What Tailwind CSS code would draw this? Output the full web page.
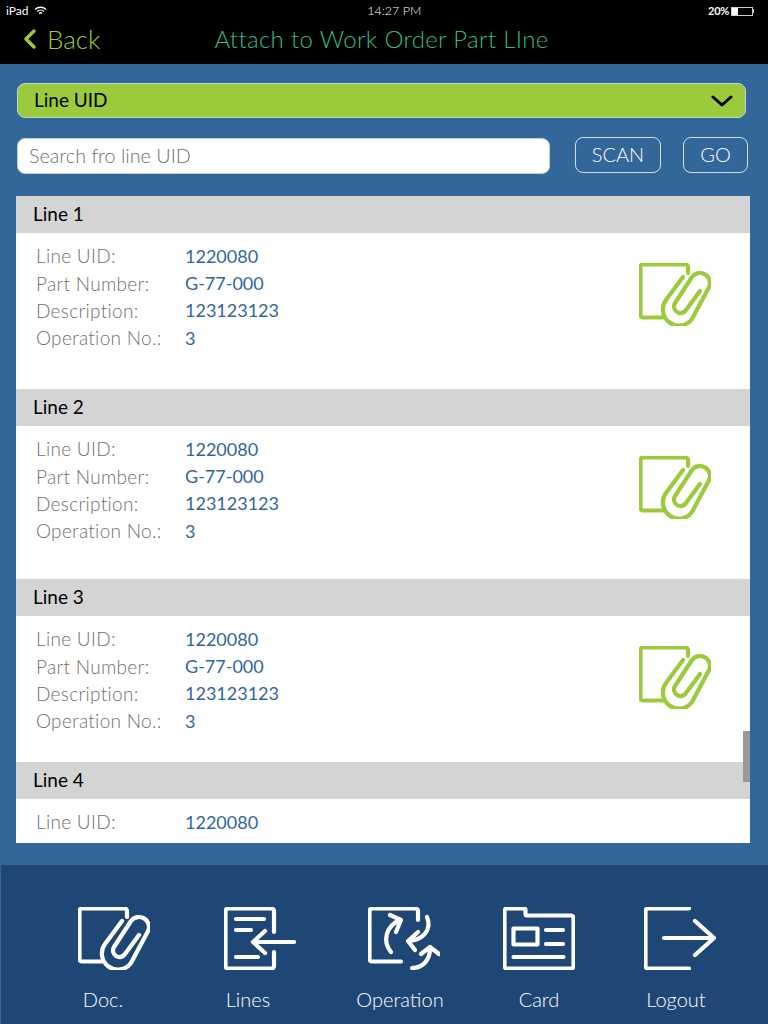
<!DOCTYPE html>
<html lang="en">
<head>
    <meta charset="UTF-8">
    <meta name="viewport" content="width=device-width, initial-scale=1.0">
    <title>Attach to Work Order Part LIne</title>
    <script src="https://cdn.jsdelivr.net/npm/@tailwindcss/browser@4"></script>
</head>
<body class="w-[768px] h-[1024px] overflow-hidden bg-[#336699] font-['Lato','Open_Sans',sans-serif] font-light">

<svg class="hidden">
    <symbol id="docIcon" viewBox="0 0 72 63">
        <g fill="none" stroke="currentColor" stroke-width="4.200" stroke-linecap="round" stroke-linejoin="round">
            <path d="M49 10V4a2.500 2.500 0 0 0-2.500-2.500H4A2.500 2.500 0 0 0 1.500 4v48A2.500 2.500 0 0 0 4 54.500h21"/>
            <path d="M61 28L47 47a6.500 6.500 0 0 1-11-7L53 14a10 10 0 0 1 16 12L53 56a16 16 0 0 1-26-19L44 14"/>
        </g>
    </symbol>
</svg>

<!-- status bar + header -->
<div class="h-[64px] bg-black text-white">
    <div class="h-[22px] flex items-center justify-between pl-[6px] pr-[14px] text-[12px] font-normal">
        <div class="flex items-center gap-[5px]">
            <span>iPad</span>
            <svg class="w-[13px] h-[10px]" viewBox="0 0 13 10" fill="none" stroke="white" stroke-width="1.300">
                <path d="M1 3.500c3-3 8-3 11 0M3 5.500c2-1.800 5-1.800 7 0M5 7.500c.8-.8 2.200-.8 3 0"/>
            </svg>
        </div>
        <span class="ml-[34px] font-light text-[12.500px]">14:27 PM</span>
        <div class="flex items-center gap-[2px]">
            <span class="text-[11px] font-bold tracking-tight">20%</span>
            <div class="w-[22px] h-[9px] border border-white/80 flex">
                <div class="w-[6px] bg-white"></div>
            </div>
            <div class="w-[1px] h-[4px] -ml-[2px] bg-white/80"></div>
        </div>
    </div>
    <div class="h-[42px] flex items-center pl-[24px] pb-[8px]">
        <svg class="w-[12px] h-[20px]" viewBox="0 0 12 20" fill="none" stroke="#9bcb3c" stroke-width="3.400" stroke-linecap="round" stroke-linejoin="round">
            <path d="M10 2L2 10l8 8"/>
        </svg>
        <span class="ml-[11px] text-[26px] text-[#9bcb3c]">Back</span>
        <h1 class="ml-[114px] text-[24px] font-light text-[#35b98c] tracking-[0.35px]">Attach to Work Order Part LIne</h1>
    </div>
</div>

<!-- filters -->
<div class="h-[132px] pt-[19px] pl-[17px]">
    <div class="w-[729px] h-[35px] rounded-lg bg-[#9bcb3c] border border-[#c5d3d8] flex items-center justify-between pl-[16px] pr-[12px] text-[19px] font-normal text-black">
        <span>Line UID</span>
        <svg class="w-[22px] h-[12px]" viewBox="0 0 22 12" fill="none" stroke="black" stroke-width="3" stroke-linecap="round" stroke-linejoin="round">
            <path d="M2 2l9 8 9-8"/>
        </svg>
    </div>
    <div class="mt-[19px] flex items-start">
        <input type="text" placeholder="Search fro line UID" class="mt-[1px] w-[533px] h-[36px] rounded-lg bg-white border border-[#c5d3d8] px-[11px] pb-[3px] text-[19.800px] font-light placeholder:text-[#6f6f6f]">
        <button class="ml-[25px] w-[86px] h-[36px] rounded-lg border border-[#d5dfe8] pb-[2px] text-white text-[20px]">SCAN</button>
        <button class="ml-[22px] w-[65px] h-[36px] rounded-lg border border-[#d5dfe8] pb-[2px] text-white text-[20px]">GO</button>
    </div>
</div>

<!-- lines list -->
<div class="relative ml-[16px] w-[734px] h-[647px] bg-white overflow-hidden">
    <div class="h-[193px]">
        <div class="h-[37px] bg-[#d4d4d4] flex items-center pl-[17px] text-[19px] font-normal text-black">Line 1</div>
        <div class="flex justify-between pl-[20px] pr-[39px] pt-[10px]">
            <div class="grid grid-cols-[149px_auto] auto-rows-[27.200px] items-center text-[19px] font-light text-[#6f6f6f] tracking-[0.3px] w-[300px]">
                <span>Line UID:</span><span class="text-[#336699] text-[18px] font-normal tracking-normal">1220080</span>
                <span>Part Number:</span><span class="text-[#336699] text-[18px] font-normal tracking-normal">G-77-000</span>
                <span>Description:</span><span class="text-[#336699] text-[18px] font-normal tracking-normal">123123123</span>
                <span>Operation No.:</span><span class="text-[#336699] text-[18px] font-normal tracking-normal">3</span>
            </div>
            <svg class="w-[72px] h-[63px] mt-[20px] text-[#9bcb3c]"><use href="#docIcon"/></svg>
        </div>
    </div>
    <div class="h-[190px]">
        <div class="h-[37px] bg-[#d4d4d4] flex items-center pl-[17px] text-[19px] font-normal text-black">Line 2</div>
        <div class="flex justify-between pl-[20px] pr-[39px] pt-[10px]">
            <div class="grid grid-cols-[149px_auto] auto-rows-[27.200px] items-center text-[19px] font-light text-[#6f6f6f] tracking-[0.3px] w-[300px]">
                <span>Line UID:</span><span class="text-[#336699] text-[18px] font-normal tracking-normal">1220080</span>
                <span>Part Number:</span><span class="text-[#336699] text-[18px] font-normal tracking-normal">G-77-000</span>
                <span>Description:</span><span class="text-[#336699] text-[18px] font-normal tracking-normal">123123123</span>
                <span>Operation No.:</span><span class="text-[#336699] text-[18px] font-normal tracking-normal">3</span>
            </div>
            <svg class="w-[72px] h-[63px] mt-[20px] text-[#9bcb3c]"><use href="#docIcon"/></svg>
        </div>
    </div>
    <div class="h-[183px]">
        <div class="h-[37px] bg-[#d4d4d4] flex items-center pl-[17px] text-[19px] font-normal text-black">Line 3</div>
        <div class="flex justify-between pl-[20px] pr-[39px] pt-[10px]">
            <div class="grid grid-cols-[149px_auto] auto-rows-[27.200px] items-center text-[19px] font-light text-[#6f6f6f] tracking-[0.3px] w-[300px]">
                <span>Line UID:</span><span class="text-[#336699] text-[18px] font-normal tracking-normal">1220080</span>
                <span>Part Number:</span><span class="text-[#336699] text-[18px] font-normal tracking-normal">G-77-000</span>
                <span>Description:</span><span class="text-[#336699] text-[18px] font-normal tracking-normal">123123123</span>
                <span>Operation No.:</span><span class="text-[#336699] text-[18px] font-normal tracking-normal">3</span>
            </div>
            <svg class="w-[72px] h-[63px] mt-[20px] text-[#9bcb3c]"><use href="#docIcon"/></svg>
        </div>
    </div>
    <div>
        <div class="h-[37px] bg-[#d4d4d4] flex items-center pl-[17px] text-[19px] font-normal text-black">Line 4</div>
        <div class="pl-[20px] pt-[10px]">
            <div class="grid grid-cols-[149px_auto] auto-rows-[27.200px] items-center text-[19px] font-light text-[#6f6f6f] tracking-[0.3px] w-[300px]">
                <span>Line UID:</span><span class="text-[#336699] text-[18px] font-normal tracking-normal">1220080</span>
            </div>
        </div>
    </div>
    <!-- scrollbar -->
    <div class="absolute right-0 top-[535px] w-[7px] h-[51px] bg-[#999999]"></div>
</div>

<!-- bottom bar -->
<div class="mt-[22px] ml-[1px] h-[159px] bg-[#1f4775] pl-[52px] pt-[42px] flex text-white text-[20px] leading-[28px]">
    <div class="w-[100px] flex flex-col items-center">
        <svg class="w-[72px] h-[63px] ml-[22px]"><use href="#docIcon"/></svg>
        <span class="mt-[15px]">Doc.</span>
    </div>
    <div class="w-[100px] ml-[45px] flex flex-col items-center">
        <svg class="w-[72px] h-[63px] ml-[24px]" viewBox="0 0 72 63" fill="none" stroke="currentColor" stroke-width="4.200" stroke-linecap="round" stroke-linejoin="round">
            <path d="M50 25V4a2.500 2.500 0 0 0-2.500-2.500H4A2.500 2.500 0 0 0 1.500 4v55A2.500 2.500 0 0 0 4 61.500h43.500A2.500 2.500 0 0 0 50 59V45"/>
            <path d="M12 12h28M12 23h15M12 50h22M29 35h41M41 24L29 35l12 11"/>
        </svg>
        <span class="mt-[15px]">Lines</span>
    </div>
    <div class="w-[100px] ml-[52px] flex flex-col items-center">
        <svg class="w-[72px] h-[63px] ml-[8px]" viewBox="0 0 72 63" fill="none" stroke="currentColor" stroke-width="4.200" stroke-linecap="round" stroke-linejoin="round">
            <path d="M50 13V4a2.500 2.500 0 0 0-2.500-2.500H4A2.500 2.500 0 0 0 1.500 4v48A2.500 2.500 0 0 0 4 54.500h29"/>
            <path d="M23 45C14 34 18 19 32 13M22 8l11 5-5 12"/>
            <path d="M59 10c5 12-3 23-19 24M50 25l-10 9 7 9"/>
            <path d="M44 61c11 0 18-8 18-20M53 47l9-7 9 7"/>
        </svg>
        <span class="mt-[15px]">Operation</span>
    </div>
    <div class="w-[100px] ml-[39px] flex flex-col items-center">
        <svg class="w-[72px] h-[63px]" viewBox="0 0 72 63" fill="none" stroke="currentColor" stroke-width="4.200" stroke-linecap="round" stroke-linejoin="round">
            <path d="M4 1.500h17a1.500 1.500 0 0 1 1.500 1.500v4A1.500 1.500 0 0 0 24 8.500h44A2.500 2.500 0 0 1 70.500 11v48a2.500 2.500 0 0 1-2.500 2.500H4A2.500 2.500 0 0 1 1.500 59V4A2.500 2.500 0 0 1 4 1.500z"/>
            <rect x="10.500" y="21.500" width="24" height="16"/>
            <path d="M43 23h17M43 37h17M10.500 50h50"/>
        </svg>
        <span class="mt-[15px]">Card</span>
    </div>
    <div class="w-[100px] ml-[37px] flex flex-col items-center">
        <svg class="w-[72px] h-[63px] ml-[8px]" viewBox="0 0 72 63" fill="none" stroke="currentColor" stroke-width="4.200" stroke-linecap="round" stroke-linejoin="round">
            <path d="M45 1.500H4A2.500 2.500 0 0 0 1.500 4v55A2.500 2.500 0 0 0 4 61.500h41"/>
            <path d="M20 31h50M51 14l19 17-19 17"/>
        </svg>
        <span class="mt-[15px]">Logout</span>
    </div>
</div>

</body>
</html>
